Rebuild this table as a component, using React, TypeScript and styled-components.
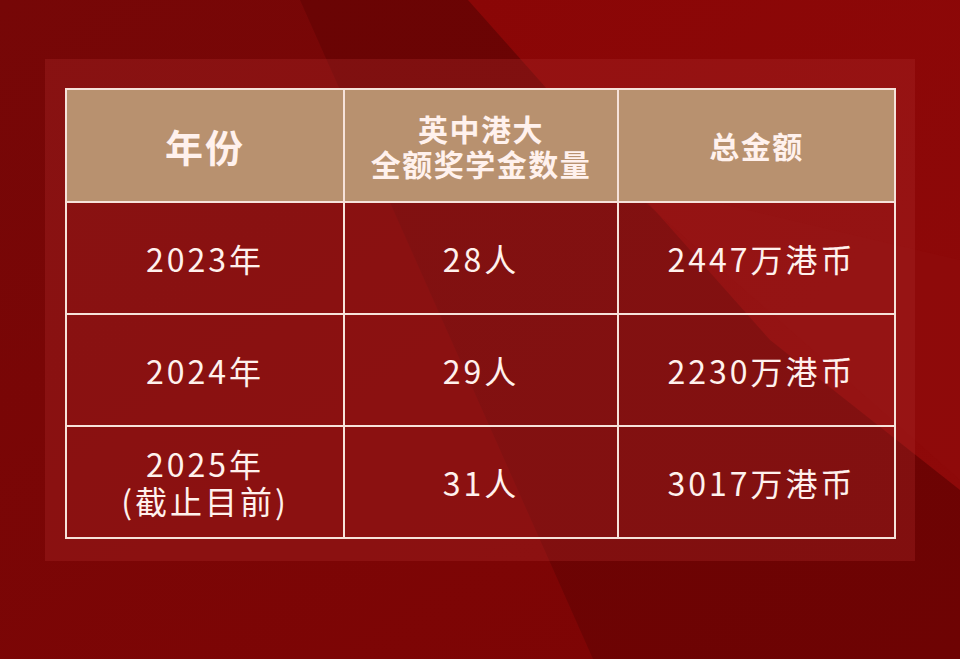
import styled, { createGlobalStyle } from "styled-components"

const GlobalStyle = createGlobalStyle`
    html, body {
        margin: 0;
        padding: 0;
        background: #7c0505;
    }
    body {
        font-family: "Noto Sans CJK SC", "Noto Sans", sans-serif;
    }
`

const rows = [
    { year: ["2023年"], count: "28人", total: "2447万港币" },
    { year: ["2024年"], count: "29人", total: "2230万港币" },
    { year: ["2025年", "(截止目前)"], count: "31人", total: "3017万港币" },
]

const Backdrop = () => (
    <BackdropSvg viewBox="0 0 960 659" preserveAspectRatio="none">
        <defs>
            <linearGradient id="base" x1="0" y1="0" x2="1" y2="1">
                <stop offset="0" stopColor="#760707" />
                <stop offset="1" stopColor="#800404" />
            </linearGradient>
            <linearGradient id="dark" x1="0" y1="0" x2="1" y2="1">
                <stop offset="0" stopColor="#6a0404" />
                <stop offset="1" stopColor="#6e0303" />
            </linearGradient>
            <linearGradient id="bright" x1="0" y1="0" x2="1" y2="1">
                <stop offset="0" stopColor="#8a0606" />
                <stop offset="1" stopColor="#8e0909" />
            </linearGradient>
        </defs>
        <rect width="960" height="659" fill="url(#base)" />
        <polygon points="300,0 960,0 960,659 593,659" fill="url(#dark)" />
        <polygon points="468,0 960,0 960,490 770,340" fill="url(#bright)" />
        <polygon points="620,180 960,260 960,480" fill="#900c0c" opacity="0.5" />
    </BackdropSvg>
)

const App = () => {
    return (
        <Page>
            <GlobalStyle />
            <Backdrop />
            <Panel>
                <Table>
                    <colgroup>
                        <col style={{ width: 278 }} />
                        <col style={{ width: 274 }} />
                        <col style={{ width: 277 }} />
                    </colgroup>
                    <thead>
                        <tr>
                            <HeadCell>
                                <BigHead>年份</BigHead>
                            </HeadCell>
                            <HeadCell>
                                <SmallHead>英中港大</SmallHead>
                                <SmallHead>全额奖学金数量</SmallHead>
                            </HeadCell>
                            <HeadCell>
                                <SmallHead>总金额</SmallHead>
                            </HeadCell>
                        </tr>
                    </thead>
                    <tbody>
                        {rows.map((r) => (
                            <tr key={r.total}>
                                <Cell>
                                    {r.year.map((line) => (
                                        <Line key={line}>{line}</Line>
                                    ))}
                                </Cell>
                                <Cell>{r.count}</Cell>
                                <Cell $shift={10}>{r.total}</Cell>
                            </tr>
                        ))}
                    </tbody>
                </Table>
            </Panel>
        </Page>
    )
}

const Page = styled.div`
    position: relative;
    width: 960px;
    height: 659px;
    overflow: hidden;
    padding: 59px 45px 0 45px;
    box-sizing: border-box;
`

const BackdropSvg = styled.svg`
    position: absolute;
    inset: 0;
    width: 100%;
    height: 100%;
    z-index: 0;
`

const Panel = styled.div`
    position: relative;
    z-index: 1;
    width: 870px;
    height: 502px;
    box-sizing: border-box;
    padding: 29px 21px 0 20px;
    background: rgba(170, 42, 42, 0.34);
`

const Table = styled.table`
    width: 829px;
    height: 448px;
    border-collapse: collapse;
    table-layout: fixed;
    border: 2px solid #f6e2da;
    color: #fff1ed;
    text-align: center;
`

const HeadCell = styled.th`
    height: 111px;
    padding: 0;
    background: #b8916f;
    border: 2px solid #f6e2da;
    font-weight: 700;
    vertical-align: middle;
`

const BigHead = styled.div`
    font-size: 38px;
    letter-spacing: 2px;
    line-height: 1;
`

const SmallHead = styled.div`
    font-size: 30px;
    line-height: 35px;
    letter-spacing: 1.5px;
    white-space: nowrap;
`

const Cell = styled.td<{ $shift?: number }>`
    height: 110px;
    padding: 0 0 0 ${(p) => p.$shift ?? 0}px;
    border: 2px solid #f6e2da;
    background: rgba(140, 22, 22, 0.12);
    font-size: 32px;
    font-weight: 400;
    letter-spacing: 3px;
    line-height: 37px;
    vertical-align: middle;
`

const Line = styled.div`
    white-space: nowrap;
`

export default App
